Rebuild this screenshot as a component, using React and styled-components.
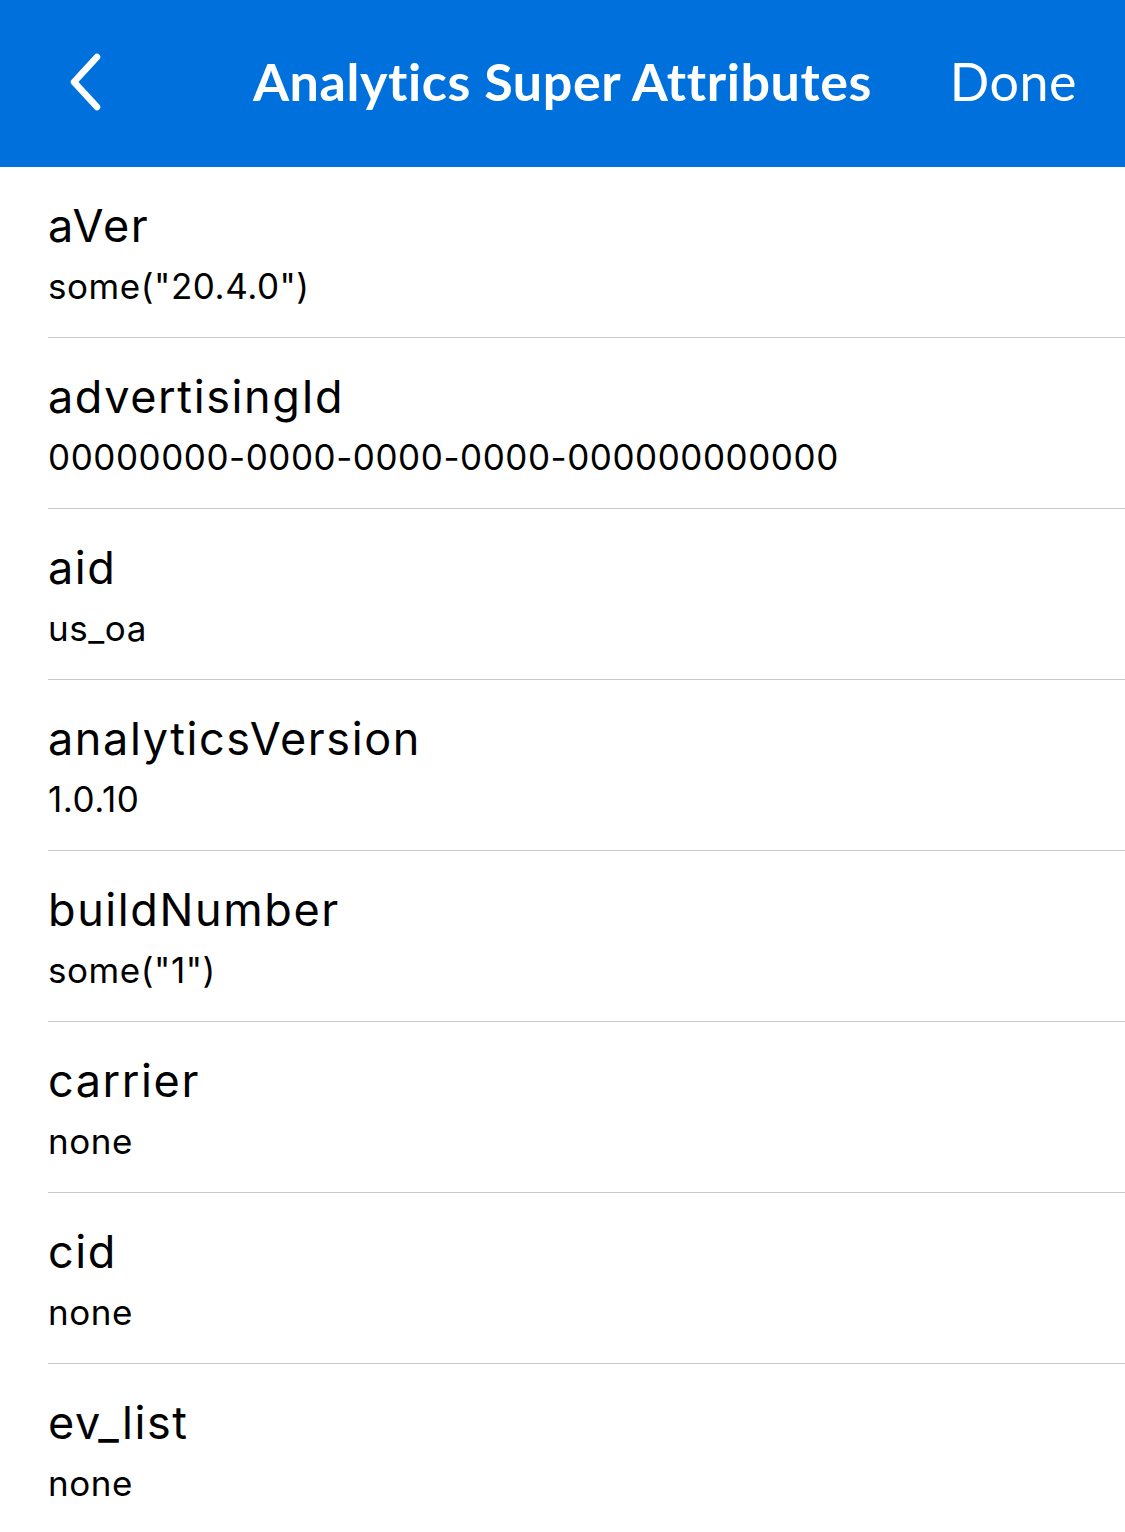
import React from 'react'
import styled, { createGlobalStyle } from 'styled-components'

const GlobalStyle = createGlobalStyle`
    html, body {
        margin: 0;
        padding: 0;
        background: #ffffff;
        overflow: hidden;
    }
    * {
        box-sizing: border-box;
    }
`

const Screen = styled.div`
    width: 1125px;
    min-height: 1532px;
    background-color: #ffffff;
`

const NavBar = styled.header`
    height: 167px;
    background-color: #0071dc;
    display: grid;
    grid-template-columns: 200px 1fr 200px;
    align-items: center;
    color: #ffffff;
    font-family: Lato, "Open Sans", sans-serif;
`

const BackButton = styled.button`
    justify-self: start;
    margin-left: 65px;
    padding: 0;
    border: none;
    background: transparent;
    display: flex;
    align-items: center;
`

const NavTitle = styled.h1`
    margin: 0 0 6px;
    text-align: center;
    font-size: 52px;
    font-weight: 700;
    letter-spacing: 0.6px;
`

const DoneButton = styled.span`
    justify-self: end;
    margin: 0 48px 6px 0;
    font-size: 52px;
    font-weight: 400;
    letter-spacing: 0.5px;
`

const List = styled.ul`
    list-style: none;
    margin: 0;
    padding: 0 0 0 48px;
`

const Row = styled.li`
    height: 171px;
    padding-top: 31px;
    border-bottom: 1px solid #c8c7cc;
    font-family: Inter, "Noto Sans", sans-serif;
    color: #000000;

    &:last-child {
        border-bottom: none;
    }
`

const Key = styled.div`
    font-size: 45px;
    line-height: 56px;
    letter-spacing: 1.6px;
`

const Value = styled.div`
    margin-top: 10px;
    font-size: 35px;
    line-height: 44px;
    letter-spacing: 0.55px;
`

const Chevron = () => (
    <svg width="44" height="64" viewBox="0 0 44 64" fill="none">
        <path
            d="M32 5 L9 30 L32 55"
            stroke="#ffffff"
            strokeWidth="6.5"
            strokeLinecap="round"
            strokeLinejoin="round"
        />
    </svg>
)

const attributes = [
    { key: 'aVer', value: 'some("20.4.0")' },
    { key: 'advertisingId', value: '00000000-0000-0000-0000-000000000000' },
    { key: 'aid', value: 'us_oa' },
    { key: 'analyticsVersion', value: '1.0.10' },
    { key: 'buildNumber', value: 'some("1")' },
    { key: 'carrier', value: 'none' },
    { key: 'cid', value: 'none' },
    { key: 'ev_list', value: 'none' },
]

export default function App() {
    return (
        <Screen>
            <GlobalStyle />
            <NavBar>
                <BackButton aria-label="Back">
                    <Chevron />
                </BackButton>
                <NavTitle>Analytics Super Attributes</NavTitle>
                <DoneButton>Done</DoneButton>
            </NavBar>
            <List>
                {attributes.map((item) => (
                    <Row key={item.key}>
                        <Key>{item.key}</Key>
                        <Value>{item.value}</Value>
                    </Row>
                ))}
            </List>
        </Screen>
    )
}
